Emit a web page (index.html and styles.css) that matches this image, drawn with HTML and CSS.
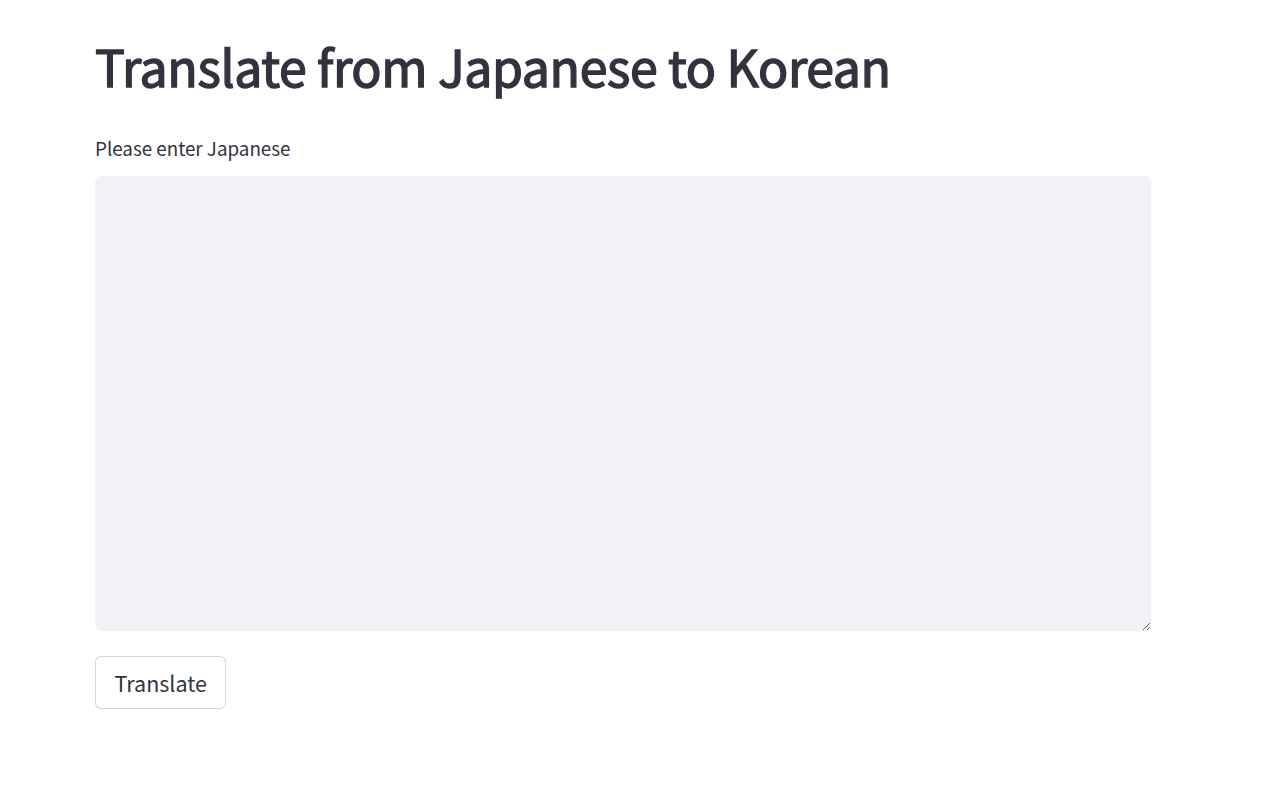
FILE: index.html
```html
<!doctype html>
<html lang="en">
<head>
    <meta charset="utf-8"/>
    <title>Translate</title>
    <link rel="stylesheet" href="styles.css">
</head>
<body>
    <div class="main">
        <h1 class="title">Translate from Japanese to Korean</h1>
        <label class="field-label" for="src">Please enter Japanese</label>
        <textarea id="src" class="field-input"></textarea>
        <button class="btn" type="button">Translate</button>
    </div>
</body>
</html>
```

FILE: styles.css
```css
body {
    margin: 0;
    padding: 0;
    background: #fff;
    color: #31333f;
    font-family: "Noto Sans CJK JP", "Source Sans Pro", "Noto Sans", sans-serif;
}

.main {
    width: 1056px;
    margin-left: 95px;
    padding-top: 34px;
    display: flex;
    flex-direction: column;
    align-items: flex-start;
}

/* no semibold face installed: regular + a thin stroke */
.title {
    margin: 0;
    font-size: 50px;
    font-weight: 400;
    -webkit-text-stroke: 1.4px #31333f;
    letter-spacing: -0.4px;
    line-height: 62px;
    color: #31333f;
}

.field-label {
    margin-top: 40px;
    font-size: 18.8px;
    line-height: 24px;
}

.field-input {
    box-sizing: border-box;
    width: 100%;
    height: 455px;
    margin-top: 16px;
    border: none;
    border-radius: 6px;
    background: #f0f2f6;
    resize: vertical;
    font-family: inherit;
    font-size: 20px;
    padding: 16px;
    outline: none;
}

.btn {
    margin-top: 25px;
    height: 53px;
    padding: 0 18.5px;
    background: #fff;
    border: 1px solid rgba(49, 51, 63, 0.2);
    border-radius: 6px;
    font-family: inherit;
    font-size: 21.5px;
    color: #31333f;
    cursor: pointer;
}
```
